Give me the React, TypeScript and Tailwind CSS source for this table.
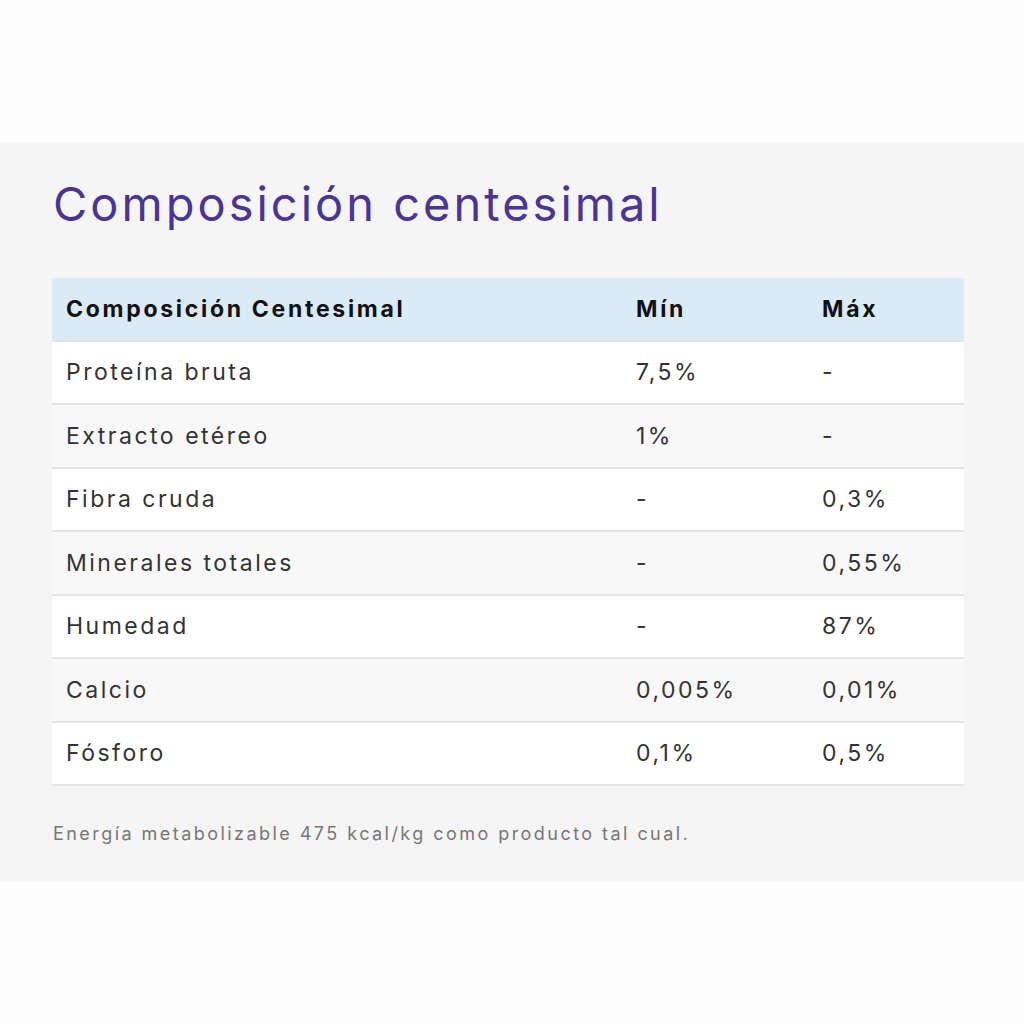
import React from "react";

const rows: [string, string, string][] = [
  ["Proteína bruta", "7,5%", "-"],
  ["Extracto etéreo", "1%", "-"],
  ["Fibra cruda", "-", "0,3%"],
  ["Minerales totales", "-", "0,55%"],
  ["Humedad", "-", "87%"],
  ["Calcio", "0,005%", "0,01%"],
  ["Fósforo", "0,1%", "0,5%"],
];

export default function App() {
  return (
    <div className="w-[1024px] h-[1024px] bg-[#fdfdfd] pt-[142px]" style={{ fontFamily: "Inter, 'Open Sans', sans-serif" }}>
      <div className="bg-[#f5f5f5] h-[740px] pl-[52px] pt-[34px]">
        <h1 className="text-[47px] leading-[56px] text-[#4a3596] font-normal tracking-[3px] pl-[1px]">
          Composición centesimal
        </h1>
        <div className="mt-[46px] w-[912px]">
          <div className="grid grid-cols-[570px_186px_1fr] h-[63.5px] items-center bg-[#daeaf7] border-b-2 border-[#dfe4e8] text-[23px] font-bold text-[#111] tracking-[2.7px]">
            <div className="pl-[14px]">Composición Centesimal</div>
            <div className="pl-[14px]">Mín</div>
            <div className="pl-[14px]">Máx</div>
          </div>
          {rows.map((r, i) => (
            <div
              key={r[0]}
              className={
                "grid grid-cols-[570px_186px_1fr] h-[63.5px] items-center border-b-2 border-[#e4e4e4] text-[23px] text-[#333] tracking-[2.5px] " +
                (i % 2 === 0 ? "bg-white" : "bg-[#f8f8f8]")
              }
            >
              <div className="pl-[14px]">{r[0]}</div>
              <div className="pl-[14px]">{r[1]}</div>
              <div className="pl-[14px]">{r[2]}</div>
            </div>
          ))}
        </div>
        <p className="mt-[35px] text-[18px] leading-[26px] text-[#777] tracking-[2.45px] pl-[1px]">
          Energía metabolizable 475 kcal/kg como producto tal cual.
        </p>
      </div>
    </div>
  );
}
